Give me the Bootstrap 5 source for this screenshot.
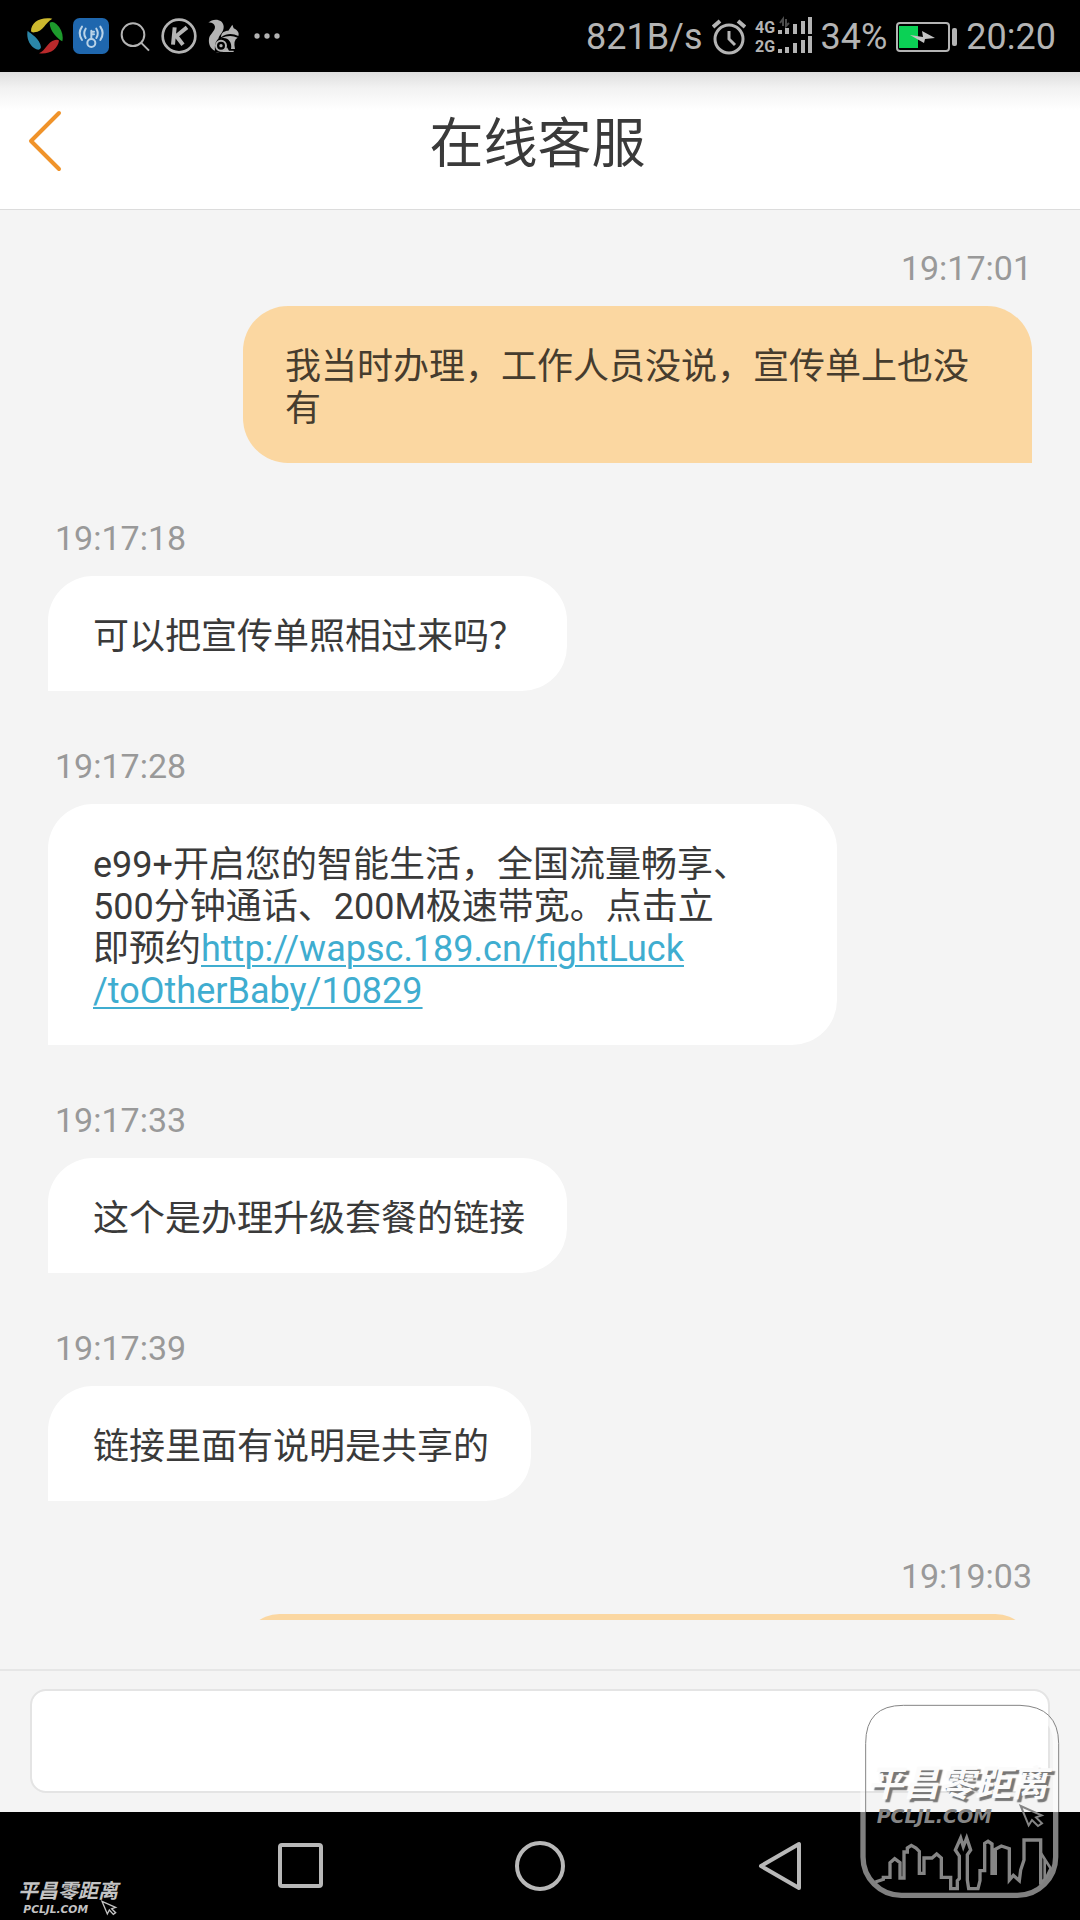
<!DOCTYPE html>
<html lang="zh-CN">
<head>
<meta charset="utf-8">
<meta name="viewport" content="width=device-width, initial-scale=1">
<title>在线客服</title>
<link href="https://cdn.jsdelivr.net/npm/bootstrap@5.3.0/dist/css/bootstrap.min.css" rel="stylesheet">
<style>
body { font-family: Roboto, "Noto Sans CJK SC", sans-serif; background: #f4f4f4; color: #3a3a3a; }
.status-bar { height: 72px; padding: 0 24px 0 27px; color: #b4b4b4; font-size: 36px; line-height: 42px; }
.status-icons { gap: 10px; }
.status-info { gap: 9px; padding-top: 2px; }
.title-bar { height: 138px; padding: 0 48px 0 27px; border-bottom: 1px solid #dcdcdc; background: linear-gradient(#dedede, #f2f2f2 16px, #fff 38px); }
.title-bar h1 { font-size: 54px; line-height: 64px; padding-top: 8px; }
.back-btn { width: 40px; height: 64px; }
.chat-log { padding: 38px 48px 0; margin-bottom: 49px; gap: 55px; }
.msg { gap: 18px; }
.msg time { font-size: 34px; line-height: 40px; color: #999; padding-left: 7px; }
.bubble { max-width: calc(100% - 195px); padding: 40px 42px 33px 45px; background: #fff; border-radius: 45px 45px 45px 0; font-size: 36px; line-height: 42px; }
.bubble-full { width: 100%; }
.msg-own .bubble { background: #fbd7a1; border-radius: 45px 45px 0 45px; padding-left: 42px; color: #463c2e; }
.bubble a { color: #3fadd0; text-decoration-thickness: 2px; text-underline-offset: 4px; }
.compose { border-top: 2px solid #e6e6e6; padding: 18px 30px 19px; }
.compose .form-control { height: 104px; border: 2px solid #e4e4e4; border-radius: 16px; font-size: 36px; }
.sys-nav { height: 108px; gap: 190px; }
.sys-nav .btn { width: 50px; height: 50px; }
.stamp-big, .stamp-small { position: absolute; right: 0; bottom: 0; pointer-events: none; }
.stamp-small { right: auto; left: 0; }
.stamp-cn { font-family: "Noto Sans CJK SC", sans-serif; font-weight: 700; font-style: italic; }
.stamp-big .stamp-cn { text-shadow: 3px 3px 1px #777; }
.stamp-en { font-family: "DejaVu Sans", sans-serif; font-weight: 700; font-style: italic; }
</style>
<script src="https://cdn.jsdelivr.net/npm/bootstrap@5.3.0/dist/js/bootstrap.bundle.min.js"></script>
</head>
<body>
<div class="position-relative d-flex flex-column vh-100 overflow-hidden">
  <div class="status-bar bg-black d-flex align-items-center justify-content-between flex-shrink-0">
    <div class="status-icons d-flex align-items-center">
      <svg width="36" height="36" viewBox="0 0 108 108" aria-hidden="true">
        <path d="M12 40C12 12 40-4 76 2C54 14 50 40 22 43Q14 44 12 40Z" fill="#cdb92e"/>
        <path d="M68 14Q78 8 88 18C104 32 110 52 106 70C92 62 68 40 68 14Z" fill="#1d9a2c"/>
        <path d="M96 68C92 92 70 110 36 106C56 98 60 72 84 66Q94 64 96 68Z" fill="#b9292b"/>
        <path d="M2 38C10 46 40 62 42 88Q40 98 28 94C4 82-2 56 2 38Z" fill="#2b86a8"/>
      </svg>
      <svg width="36" height="36" viewBox="0 0 108 108" fill="none" stroke="#b9d3e8" stroke-width="6" stroke-linecap="round" aria-hidden="true">
        <rect width="108" height="108" rx="20" fill="#1f67ae" stroke="none"/>
        <circle cx="55" cy="75" r="12"/><path d="M55 62V38M55 41h8M55 49h8M38 32q-9 14 0 28M70 32q9 14 0 28M27 26q-14 20 0 40M82 26q14 20 0 40" stroke-width="6"/>
      </svg>
      <svg width="32" height="36" viewBox="0 0 96 108" fill="none" stroke="#b4b4b4" stroke-width="6" aria-hidden="true"><circle cx="42" cy="50" r="34"/><path d="M66 74L90 98"/></svg>
      <svg width="36" height="36" viewBox="0 0 108 108" fill="none" stroke="#b4b4b4" aria-hidden="true"><circle cx="54" cy="54" r="49" stroke-width="8"/><path d="M41 28L36 80M78 28L46 54L66 80" stroke-width="12"/></svg>
      <svg width="34" height="36" viewBox="0 0 102 108" aria-hidden="true">
        <path d="M4 14C18 0 48 2 50 25C51 43 38 48 34 62C28 68 22 76 24 98C10 92 4 78 6 62C8 48 24 40 24 26C22 16 12 12 4 14Z" fill="#b4b4b4"/>
        <path d="M42 58C42 44 52 38 64 38L76 20L80 31C92 36 98 46 94 54C78 46 60 44 42 58Z" fill="#b4b4b4"/>
        <path d="M42 61Q68 48 92 59Q78 66 84 93H72C77 71 60 55 42 61Z" fill="#b4b4b4"/>
        <circle cx="42" cy="83" r="15" fill="#000" stroke="#b4b4b4" stroke-width="6"/><circle cx="42" cy="83" r="5" fill="#b4b4b4"/>
        <path d="M26 102Q48 106 60 88L66 98H80V102Z" fill="#b4b4b4"/>
      </svg>
      <svg width="34" height="36" viewBox="0 0 102 108" fill="#b4b4b4" aria-hidden="true"><circle cx="18" cy="54" r="8"/><circle cx="48" cy="54" r="8"/><circle cx="78" cy="54" r="8"/></svg>
    </div>
    <div class="status-info d-flex align-items-center">
      <span>821B/s</span>
      <svg width="34" height="36" viewBox="0 0 34 36" fill="none" stroke="#b4b4b4" stroke-width="3" aria-hidden="true"><circle cx="17" cy="20" r="14"/><path d="M17 12v8l6 6"/><path d="M1 8l7-6M33 8l-7-6" stroke-width="4"/></svg>
      <div class="d-flex align-items-center gap-2">
        <svg class="overflow-visible" width="58" height="42" viewBox="0 0 58 42" fill="#b4b4b4" font-family="Roboto, sans-serif" font-weight="700" font-size="16" aria-label="4G 2G">
          <text x="0" y="17">4G</text><text x="0" y="36">2G</text>
          <path d="M25 7l3-4v7M31 3v7l3-3" fill="none" stroke="#4b4b4b" stroke-width="2"/>
          <path d="M23 14h4v4h-4zM30 12h4v6h-4zM38 8h4v10h-4zM46 5h4v13h-4zM53 1h4v17h-4zM23 33h4v4h-4zM30 31h4v6h-4zM38 27h4v10h-4zM46 24h4v13h-4zM53 20h4v17h-4z"/>
        </svg>
        <span>34%</span>
      </div>
      <svg width="61" height="30" viewBox="0 0 61 30" aria-hidden="true"><rect x="1" y="1" width="52" height="28" rx="3" fill="none" stroke="#b4b4b4" stroke-width="2"/><path d="M3 4h19v22H3z" fill="#0bd155"/><path d="M14 13l13 2-1-6 13 7-10 1-1 4z" fill="#c4c4c4"/><rect x="56" y="6" width="5" height="18" rx="2" fill="#b4b4b4"/></svg>
      <span>20:20</span>
    </div>
  </div>

  <header class="title-bar d-flex align-items-center flex-shrink-0">
    <button class="back-btn btn p-0 border-0 d-flex align-items-center" type="button" aria-label="返回">
      <svg width="36" height="62" viewBox="0 0 36 62" fill="none" stroke="#f0932a" stroke-width="4" stroke-linecap="round" stroke-linejoin="round"><path d="M32 3L4 31L32 59"/></svg>
    </button>
    <h1 class="flex-grow-1 text-center fw-normal mb-0 pe-4">在线客服</h1>
  </header>

  <main class="chat-log d-flex flex-column flex-grow-1 overflow-hidden">
    <div class="msg msg-own d-flex flex-column align-items-end"><time>19:17:01</time><div class="bubble">我当时办理，工作人员没说，宣传单上也没有</div></div>
    <div class="msg d-flex flex-column align-items-start"><time>19:17:18</time><div class="bubble">可以把宣传单照相过来吗？</div></div>
    <div class="msg d-flex flex-column align-items-start"><time>19:17:28</time><div class="bubble bubble-full">e99+开启您的智能生活，全国流量畅享、<br>500分钟通话、200M极速带宽。点击立<br>即预约<a href="#">http://wapsc.189.cn/fightLuck<br>/toOtherBaby/10829</a></div></div>
    <div class="msg d-flex flex-column align-items-start"><time>19:17:33</time><div class="bubble">这个是办理升级套餐的链接</div></div>
    <div class="msg d-flex flex-column align-items-start"><time>19:17:39</time><div class="bubble">链接里面有说明是共享的</div></div>
    <div class="msg msg-own d-flex flex-column align-items-end"><time>19:19:03</time><div class="bubble bubble-full"></div></div>
  </main>

  <form class="compose flex-shrink-0"><input class="form-control" type="text" aria-label="输入消息"></form>

  <nav class="sys-nav bg-black d-flex align-items-center justify-content-center flex-shrink-0">
    <button class="btn p-0 border-0 d-flex" type="button" aria-label="最近任务"><svg width="50" height="50" fill="none" stroke="#b8b8b8" stroke-width="4"><rect x="5" y="4" width="41" height="41" rx="2"/></svg></button>
    <button class="btn p-0 border-0 d-flex" type="button" aria-label="主页"><svg width="50" height="50" fill="none" stroke="#b8b8b8" stroke-width="4"><circle cx="25" cy="25" r="23"/></svg></button>
    <button class="btn p-0 border-0 d-flex" type="button" aria-label="返回上一页"><svg width="50" height="50" fill="none" stroke="#b8b8b8" stroke-width="4" stroke-linejoin="round"><path d="M44 3V47L6 25Z"/></svg></button>
  </nav>

  <svg class="stamp-big" width="240" height="240" viewBox="0 0 720 720" fill="none">
    <rect x="69" y="75" width="578" height="571" rx="115" stroke="#fff" stroke-opacity=".5" stroke-width="16"/>
    <path d="M77 396V190Q77 76 190 76H540Q655 80 656 190V396" stroke="#858585" stroke-width="3"/>
    <text class="stamp-cn" x="82" y="348" font-size="108" fill="#fbfbfb">平昌零距离</text>
    <text class="stamp-en" x="110" y="430" font-size="57" fill="#858585">PCLJL.COM</text>
    <path d="M542 378L605 406L588 412L606 430L594 438L576 420L566 436Z" stroke="#858585" stroke-width="6"/>
    <path d="M106 606L130 598V592H150V548L164 536L180 548V594H192V516H202V504L214 496L228 504L238 514V580H252V534H276L290 522L304 534V592H332V626H352V602L358 596V528L346 510L362 474L370 500L380 474L392 510L382 524V600L386 626H414L420 602V572H434V490L444 484L456 492V580H466V508L484 498L508 506V600L520 586L538 602L542 570L552 540V480H602V614" stroke="#858585" stroke-width="10"/>
    <path d="M602 518L632 565L620 590L602 610M614 536V594" stroke="#858585" stroke-width="8"/>
  </svg>
  <svg class="stamp-small" width="130" height="60" viewBox="0 0 390 180" fill="none">
    <text class="stamp-cn" x="54" y="115" font-size="60" fill="#c4c4c4">平昌零距离</text>
    <text class="stamp-en" x="70" y="158" font-size="32" fill="#c4c4c4">PCLJL.COM</text>
    <path d="M306 124L347 142L335 146L347 158L340 163L328 150L322 162Z" stroke="#c4c4c4" stroke-width="4"/>
  </svg>
</div>
</body>
</html>
